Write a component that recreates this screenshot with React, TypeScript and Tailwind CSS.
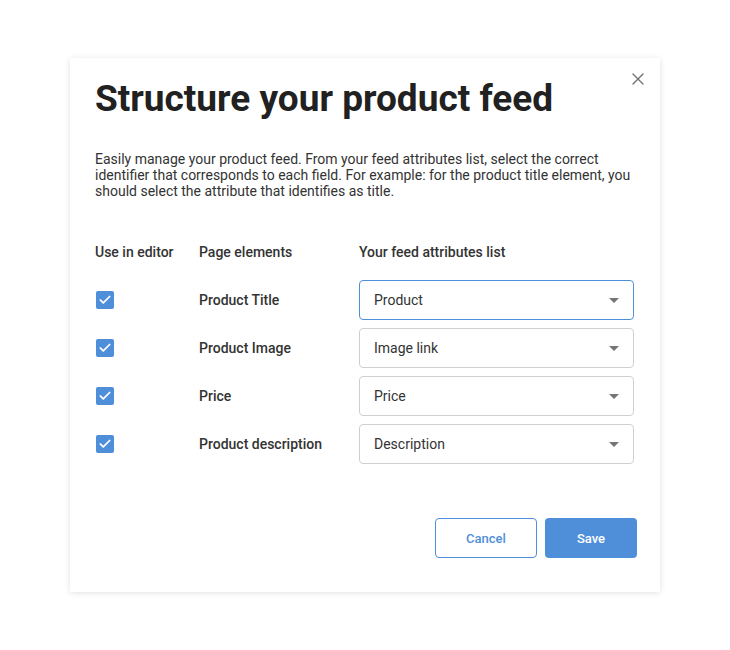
import { Check, X } from "lucide-react";

const ROWS = [
  { element: "Product Title", value: "Product", focused: true },
  { element: "Product Image", value: "Image link", focused: false },
  { element: "Price", value: "Price", focused: false },
  { element: "Product description", value: "Description", focused: false },
];

function Caret() {
  return (
    <svg width="10" height="5" viewBox="0 0 10 5" className="fill-[#757575]">
      <path d="M0 0h10L5 5z" />
    </svg>
  );
}

export default function App() {
  return (
    <div
      className="min-h-[650px] w-[730px] bg-white pt-[58px] pl-[70px]"
      style={{ fontFamily: "Roboto, 'Liberation Sans', sans-serif" }}
    >
      <div className="relative h-[534px] w-[590px] bg-white px-[25px] pt-[93px] shadow-[0_1px_6px_rgba(0,0,0,0.12)]">
        <button
          className="absolute top-[11px] right-[12px] text-[#757575]"
          type="button"
        >
          <X className="h-[20px] w-[20px]" strokeWidth={1.6} />
        </button>
        <h1 className="absolute top-[17px] left-[25px] text-[37px] leading-[48px] font-bold text-[#212121]">
          Structure your product feed
        </h1>

        <p className="text-[14px] leading-[16px] text-[#333333]">
          Easily manage your product feed. From your feed attributes list,
          select the correct identifier that corresponds to each field. For
          example: for the product title element, you should select the
          attribute that identifies as title.
        </p>

        <div className="mt-[45px] flex text-[14px] leading-[16px] font-medium text-[#333333]">
          <div className="w-[104px]">Use in editor</div>
          <div className="w-[160px]">Page elements</div>
          <div>Your feed attributes list</div>
        </div>

        <div className="mt-[20px] flex flex-col gap-[8px]">
          {ROWS.map((row) => (
            <div className="flex h-[40px] items-center" key={row.element}>
              <div className="w-[104px] pl-[1px]">
                <span className="flex h-[18px] w-[18px] items-center justify-center rounded-[2px] bg-[#4f8fda]">
                  <Check className="h-[14px] w-[14px] text-white" strokeWidth={3} />
                </span>
              </div>
              <div className="w-[160px] text-[14px] font-medium text-[#333333]">
                {row.element}
              </div>
              <div
                className={`flex h-[40px] w-[275px] items-center justify-between rounded-[4px] border pr-[14px] pl-[14px] text-[14px] text-[#333333] ${
                  row.focused ? "border-[#4f8fda]" : "border-[#cfcfcf]"
                }`}
              >
                <span>{row.value}</span>
                <Caret />
              </div>
            </div>
          ))}
        </div>

        <div className="absolute right-[23px] bottom-[34px] flex gap-[8px]">
          <button
            className="h-[40px] w-[102px] rounded-[4px] border border-[#4f8fda] bg-white pt-[1px] text-[13px] font-medium text-[#4f8fda]"
            type="button"
          >
            Cancel
          </button>
          <button
            className="h-[40px] w-[92px] rounded-[4px] bg-[#4f8fda] pt-[1px] text-[13px] font-medium text-white"
            type="button"
          >
            Save
          </button>
        </div>
      </div>
    </div>
  );
}
